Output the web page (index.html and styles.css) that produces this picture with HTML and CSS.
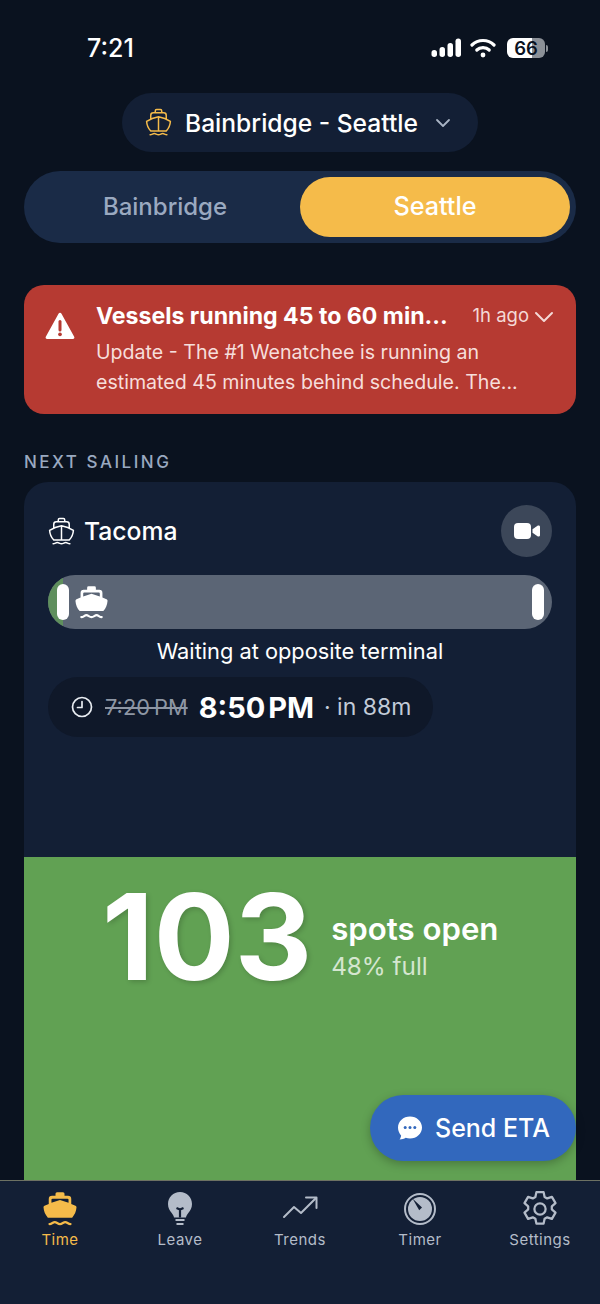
FILE: index.html
```html
<!DOCTYPE html>
<html lang="en">
<head>
    <meta charset="UTF-8">
    <title>Ferry</title>
    <link rel="stylesheet" href="styles.css">
</head>
<body>
    <svg class="defs" width="0" height="0">
        <symbol id="boat-line" viewBox="0 0 24 24">
            <path d="M9.500 4.500V3a1 1 0 0 1 1-1h3a1 1 0 0 1 1 1v1.500M6 9.500V6.500a2 2 0 0 1 2-2h8a2 2 0 0 1 2 2v3M12 7.500C9 8 6 9 2.800 11.200 3 14 4 16.500 6 18.500h12c2-2 3-4.500 3.200-7.300C18 9 15 8 12 7.500ZM12 7.500v11M5.500 21.500c1.500 0 2-1 3.200-1s1.900 1 3.300 1 2.100-1 3.300-1 1.700 1 3.200 1" fill="none" stroke="currentColor" stroke-width="1.150" stroke-linecap="round" stroke-linejoin="round"/>
        </symbol>
        <symbol id="boat-solid" viewBox="0 0 24 24">
            <path fill-rule="evenodd" d="M9 1.800a1 1 0 0 1 1-1h4a1 1 0 0 1 1 1v1.400h2.300A2.200 2.200 0 0 1 19.500 5.400v3.200l2.800 1.200c.5.200.7.600.7 1.100-.2 2.700-1.200 5-2.900 6.900H3.900C2.200 15.900 1.200 13.600 1 10.900c0-.5.200-.9.700-1.100l2.800-1.200V5.400a2.200 2.200 0 0 1 2.200-2.200H9ZM7 5.200a.7.700 0 0 0-.7.700v2l5.700-1.900 5.700 1.900v-2a.7.700 0 0 0-.7-.7H7Z"/>
            <path d="M5 22c1.600 0 2.200-1.300 3.500-1.300S10.500 22 12 22s2.200-1.300 3.500-1.300S17.400 22 19 22" fill="none" stroke="currentColor" stroke-width="1.500" stroke-linecap="round"/>
        </symbol>
    </svg>

    <div class="page">
        <div class="status-bar">
            <span class="clock">7:21</span>
            <div class="status-icons">
                <svg width="31" height="20" viewBox="0 0 31 20" fill="#fff">
                    <rect x="0.500" y="12" width="5.500" height="7" rx="2.700"/>
                    <rect x="8.500" y="9" width="5.500" height="10" rx="2.700"/>
                    <rect x="16.500" y="5" width="5.500" height="14" rx="2.700"/>
                    <rect x="24.500" y="0.500" width="5.500" height="18.500" rx="2.700"/>
                </svg>
                <svg width="26" height="20" viewBox="0 0 26 20" fill="none" stroke="#fff" stroke-width="3.200" stroke-linecap="round">
                    <path d="M2 7C8 1 18 1 24 7"/>
                    <path d="M6.800 12C10 8.800 16 8.800 19.200 12"/>
                    <circle cx="13" cy="17" r="2.400" fill="#fff" stroke="none"/>
                </svg>
                <div class="battery"><span class="battery-num">66</span></div>
                <span class="battery-cap"></span>
            </div>
        </div>

        <div class="route-row">
            <div class="route-picker">
                <svg class="route-boat"><use href="#boat-line"/></svg>
                <span class="route-name">Bainbridge - Seattle</span>
                <svg class="route-chev" viewBox="0 0 16 10" fill="none" stroke="currentColor" stroke-width="1.800" stroke-linecap="round" stroke-linejoin="round"><path d="M2 2l6 6 6-6"/></svg>
            </div>
        </div>

        <div class="segment">
            <div class="segment-item">Bainbridge</div>
            <div class="segment-item active">Seattle</div>
        </div>

        <div class="alert">
            <svg class="alert-icon" viewBox="0 0 26 26">
                <path d="M13 1.500c.6 0 1 .3 1.300.8l11 20c.5 1-.1 1.900-1.100 1.900H1.800c-1 0-1.600-.9-1.100-1.900l11-20c.3-.5.7-.8 1.300-.8Z" fill="#fff"/>
                <path d="M13 9v7.500" stroke="#b63a32" stroke-width="2.600" stroke-linecap="round"/>
                <circle cx="13" cy="20.200" r="1.600" fill="#b63a32"/>
            </svg>
            <div class="alert-body">
                <div class="alert-top">
                    <span class="alert-title">Vessels running 45 to 60 min...</span>
                    <span class="alert-time">1h ago</span>
                    <svg class="alert-chev" viewBox="0 0 20 12" fill="none" stroke="currentColor" stroke-width="2" stroke-linecap="round" stroke-linejoin="round"><path d="M2 2l8 8 8-8"/></svg>
                </div>
                <p class="alert-text">Update - The #1 Wenatchee is running an<br>estimated 45 minutes behind schedule. The...</p>
            </div>
        </div>

        <div class="section-label">NEXT SAILING</div>

        <div class="card">
            <div class="card-top">
                <div class="vessel-row">
                    <div class="vessel">
                        <svg class="vessel-icon"><use href="#boat-line"/></svg>
                        <span class="vessel-name">Tacoma</span>
                    </div>
                    <div class="camera">
                        <svg width="26" height="16" viewBox="0 0 26 16" fill="#fff">
                            <rect x="0" y="0" width="17" height="16" rx="4"/>
                            <path d="M18.500 6.200l5-3.400c.9-.6 2.500-.2 2.500 1v8.400c0 1.200-1.600 1.600-2.500 1l-5-3.400Z"/>
                        </svg>
                    </div>
                </div>

                <div class="progress">
                    <div class="progress-fill"></div>
                    <span class="progress-stop"></span>
                    <svg class="progress-boat"><use href="#boat-solid"/></svg>
                    <span class="progress-stop end"></span>
                </div>
                <div class="progress-label">Waiting at opposite terminal</div>

                <div class="time-pill">
                    <svg class="clock-icon" viewBox="0 0 22 22" fill="none" stroke="currentColor" stroke-width="1.700" stroke-linecap="round" stroke-linejoin="round"><circle cx="11" cy="11" r="9.500"/><path d="M11 5.500V11.500H6.500"/></svg>
                    <span class="time-old">7:20 PM</span>
                    <span class="time-new">8:50 PM</span>
                    <span class="time-in">· in 88m</span>
                </div>
            </div>

            <div class="capacity">
                <span class="capacity-num">103</span>
                <div class="capacity-text">
                    <span class="capacity-open">spots open</span>
                    <span class="capacity-full">48% full</span>
                </div>
            </div>
        </div>

        <div class="fab">
            <svg width="26" height="26" viewBox="0 0 26 26">
                <path d="M13 1.500c6.600 0 12 4.900 12 11s-5.400 11-12 11c-1.500 0-3-.3-4.300-.7-1.500 1-3.700 1.700-6.200 1.700 1-1.200 1.500-2.700 1.600-4.100C2.200 18.300 1 15.500 1 12.500c0-6.100 5.400-11 12-11Z" fill="#fff"/>
                <circle cx="8.200" cy="12.500" r="1.500" fill="#3268bd"/>
                <circle cx="13" cy="12.500" r="1.500" fill="#3268bd"/>
                <circle cx="17.800" cy="12.500" r="1.500" fill="#3268bd"/>
            </svg>
            <span>Send ETA</span>
        </div>

        <nav class="tabs">
            <div class="tab active">
                <svg class="tab-icon solid"><use href="#boat-solid"/></svg>
                <span>Time</span>
            </div>
            <div class="tab">
                <svg class="tab-icon" viewBox="0 0 36 36">
                    <path d="M18 1C24.800 1 30 6.300 30 13c0 3.800-1.700 6.400-3.500 8.700-1.300 1.700-2.300 3.200-2.500 4.800H12c-.2-1.600-1.200-3.100-2.500-4.800C7.700 19.400 6 16.800 6 13 6 6.300 11.200 1 18 1Z" fill="#b4bcc9"/>
                    <path d="M14.500 17l3.500 1.500 3.500-1.500M18 18v8.500" stroke="#131f35" stroke-width="2.200" fill="none"/>
                    <path d="M13.500 29h9M14.500 33h7" stroke="#b4bcc9" stroke-width="2.200" fill="none"/>
                </svg>
                <span>Leave</span>
            </div>
            <div class="tab">
                <svg class="tab-icon line" viewBox="0 0 36 36">
                    <path d="M2 26l10-10 7 6 15-15"/>
                    <path d="M24 6.500h10.500V17"/>
                </svg>
                <span>Trends</span>
            </div>
            <div class="tab">
                <svg class="tab-icon" viewBox="0 0 36 36">
                    <circle cx="18" cy="18" r="15" fill="none" stroke="#b4bcc9" stroke-width="2"/>
                    <circle cx="18" cy="18" r="12" fill="#b4bcc9"/>
                    <path d="M10.500 7.500L20 16.500l-2.800 2.800Z" fill="#131f35"/>
                </svg>
                <span>Timer</span>
            </div>
            <div class="tab">
                <svg class="tab-icon line" viewBox="2 1 32 32">
                    <path d="M14.800 2h6.400l.9 4.300 2.300 1.300 4.200-1.400 3.200 5.600-3.300 2.900v2.600l3.300 2.900-3.200 5.600-4.200-1.400-2.300 1.300-.9 4.300h-6.400l-.9-4.300-2.300-1.300-4.200 1.400-3.200-5.600 3.300-2.900v-2.600l-3.300-2.900 3.200-5.600 4.200 1.400 2.300-1.300Z"/>
                    <circle cx="18" cy="17" r="5"/>
                </svg>
                <span>Settings</span>
            </div>
        </nav>
    </div>
</body>
</html>
```

FILE: styles.css
```css
* {
    box-sizing: border-box;
}
html, body {
    margin: 0;
    padding: 0;
}
body {
    background-color: #0a121f;
    font-family: Inter, "Noto Sans", sans-serif;
    color: #ffffff;
}
.defs {
    display: block;
    height: 0;
}
.page {
    position: relative;
    width: 600px;
    height: 1304px;
    display: flex;
    flex-direction: column;
    overflow: hidden;
}

/* status bar */
.status-bar {
    height: 93px;
    flex: none;
    display: flex;
    justify-content: space-between;
    align-items: flex-start;
    padding: 33px 52px 0 87px;
}
.clock {
    font-size: 25px;
    line-height: 30px;
    font-weight: 500;
}
.status-icons {
    display: flex;
    align-items: center;
    gap: 8px;
    height: 30px;
}
.battery {
    width: 38px;
    height: 20px;
    margin-left: 3px;
    border-radius: 6px;
    background: linear-gradient(to right, #ffffff 66%, #8b9097 66%);
    display: flex;
    align-items: center;
    justify-content: center;
}
.battery-num {
    color: #0a121f;
    font-size: 18.500px;
    font-weight: 600;
}
.battery-cap {
    width: 2px;
    height: 7px;
    margin-left: -7px;
    background-color: #8b9097;
    border-radius: 0 2px 2px 0;
}

/* route picker */
.route-row {
    display: flex;
    justify-content: center;
}
.route-picker {
    width: 356px;
    height: 59px;
    background-color: #131f35;
    border-radius: 30px;
    display: flex;
    align-items: center;
    padding-left: 21px;
}
.route-boat {
    width: 31px;
    height: 31px;
    color: #f5bb4a;
}
.route-name {
    margin-left: 11px;
    font-size: 24.600px;
    font-weight: 500;
    white-space: nowrap;
}
.route-chev {
    width: 16px;
    height: 10px;
    margin-left: 17px;
    color: #a9b4c4;
}

/* segment */
.segment {
    margin: 19px 24px 0;
    height: 72px;
    padding: 6px;
    border-radius: 36px;
    background-color: #1a2b47;
    display: flex;
}
.segment-item {
    flex: 1;
    border-radius: 30px;
    display: flex;
    align-items: center;
    justify-content: center;
    font-size: 24px;
    font-weight: 500;
    color: #9aa9c0;
    padding-bottom: 2px;
}
.segment-item.active {
    background-color: #f5bb4a;
    color: #ffffff;
    font-size: 25.200px;
    font-weight: 500;
}

/* alert */
.alert {
    margin: 42px 24px 0;
    height: 129px;
    border-radius: 20px;
    background-color: #b63a32;
    display: flex;
    padding: 17px 22px 0 21px;
}
.alert-icon {
    flex: none;
    width: 30px;
    height: 30px;
    margin-top: 9px;
}
.alert-body {
    flex: 1;
    margin-left: 21px;
}
.alert-top {
    display: flex;
    align-items: center;
    height: 28px;
}
.alert-title {
    font-size: 23.100px;
    font-weight: 700;
    white-space: nowrap;
}
.alert-time {
    margin-left: auto;
    font-size: 18.500px;
    color: #f4d9d6;
    margin-top: -3px;
}
.alert-chev {
    width: 20px;
    height: 12px;
    margin-left: 5px;
    margin-top: 2px;
    color: #f4d9d6;
}
.alert-text {
    margin: 7px 0 0;
    font-size: 19.600px;
    line-height: 30px;
    color: #f6dedb;
    white-space: nowrap;
}

/* next sailing */
.section-label {
    margin: 38px 24px 0;
    height: 20px;
    font-size: 17px;
    line-height: 20px;
    font-weight: 500;
    letter-spacing: 2.500px;
    color: #9aa9c0;
}
.card {
    margin: 10px 24px 0;
    width: 552px;
    height: 698px;
    border-radius: 24px 24px 0 0;
    background-color: #131f35;
    overflow: hidden;
    display: flex;
    flex-direction: column;
}
.card-top {
    height: 375px;
    flex: none;
    padding: 23px 24px 0;
}
.vessel-row {
    display: flex;
    justify-content: space-between;
    align-items: center;
    height: 52px;
}
.vessel {
    display: flex;
    align-items: center;
    gap: 7px;
    margin-left: -2px;
}
.vessel-icon {
    width: 31px;
    height: 31px;
    color: #ffffff;
}
.vessel-name {
    font-size: 24.700px;
    font-weight: 500;
}
.camera {
    width: 51px;
    height: 52px;
    border-radius: 50%;
    background-color: #3c4759;
    display: flex;
    align-items: center;
    justify-content: center;
}
.progress {
    position: relative;
    margin-top: 18px;
    height: 54px;
    border-radius: 27px;
    background-color: #5b6575;
    overflow: hidden;
    display: flex;
    align-items: center;
    padding: 0 9px;
}
.progress-fill {
    position: absolute;
    left: 0;
    top: 0;
    bottom: 0;
    width: 15px;
    background-color: #5f8f5d;
}
.progress-stop {
    position: relative;
    width: 12px;
    height: 36px;
    border-radius: 6px;
    background-color: #ffffff;
}
.progress-stop.end {
    margin-left: auto;
    margin-right: -1px;
}
.progress-boat {
    position: relative;
    width: 35px;
    height: 35px;
    margin-left: 5px;
    color: #ffffff;
    fill: #ffffff;
}
.progress-label {
    margin-top: 7px;
    text-align: center;
    font-size: 21.800px;
    line-height: 30px;
    font-weight: 400;
}
.time-pill {
    margin-top: 11px;
    width: 385px;
    height: 60px;
    border-radius: 30px;
    background-color: #0f1829;
    display: flex;
    align-items: center;
    padding-left: 23px;
}
.clock-icon {
    width: 22px;
    height: 22px;
    color: #e8ecf1;
}
.time-old {
    margin-left: 12px;
    font-size: 21.800px;
    color: #8d96a4;
    text-decoration: line-through;
    white-space: nowrap;
    word-spacing: -2px;
}
.time-new {
    margin-left: 11px;
    font-size: 29px;
    font-weight: 700;
    white-space: nowrap;
    word-spacing: -4px;
}
.time-in {
    margin-left: 10px;
    font-size: 23px;
    color: #c2cbd8;
    white-space: nowrap;
}

/* capacity */
.capacity {
    flex: 1;
    background-color: #61a153;
    display: flex;
    align-items: flex-start;
    padding: 17px 0 0 78px;
}
.capacity-num {
    font-size: 120px;
    line-height: 125px;
    font-weight: 700;
    text-shadow: 2px 2px 5px rgba(0, 0, 0, 0.18);
}
.capacity-text {
    display: flex;
    flex-direction: column;
    margin: 37px 0 0 19px;
}
.capacity-open {
    font-size: 31.200px;
    line-height: 36px;
    font-weight: 600;
    white-space: nowrap;
}
.capacity-full {
    font-size: 24.300px;
    line-height: 38px;
    color: #d5e6d0;
}

/* floating button */
.fab {
    position: absolute;
    left: 370px;
    top: 1095px;
    width: 206px;
    height: 66px;
    border-radius: 33px;
    background-color: #3268bd;
    box-shadow: 0 3px 10px rgba(0, 0, 0, 0.25);
    display: flex;
    align-items: center;
    padding-left: 27px;
    gap: 12px;
    font-size: 25px;
    font-weight: 500;
}

/* tab bar */
.tabs {
    height: 124px;
    flex: none;
    background-color: #131f35;
    border-top: 1px solid #6d7163;
    display: flex;
    justify-content: space-around;
    padding: 10px 0 0;
}
.tab {
    flex: 1;
    display: flex;
    flex-direction: column;
    align-items: center;
    font-size: 15px;
    font-weight: 400;
    letter-spacing: 0.5px;
    color: #b4bcc9;
}
.tab span {
    margin-top: 3px;
    line-height: 20px;
}
.tab-icon {
    width: 36px;
    height: 36px;
    color: #b4bcc9;
}
.tab-icon.line {
    fill: none;
    stroke: #b4bcc9;
    stroke-width: 2;
    stroke-linecap: round;
    stroke-linejoin: round;
}
.tab.active {
    color: #f5bb4a;
}
.tab.active .tab-icon {
    color: #f5bb4a;
    fill: #f5bb4a;
}
```
